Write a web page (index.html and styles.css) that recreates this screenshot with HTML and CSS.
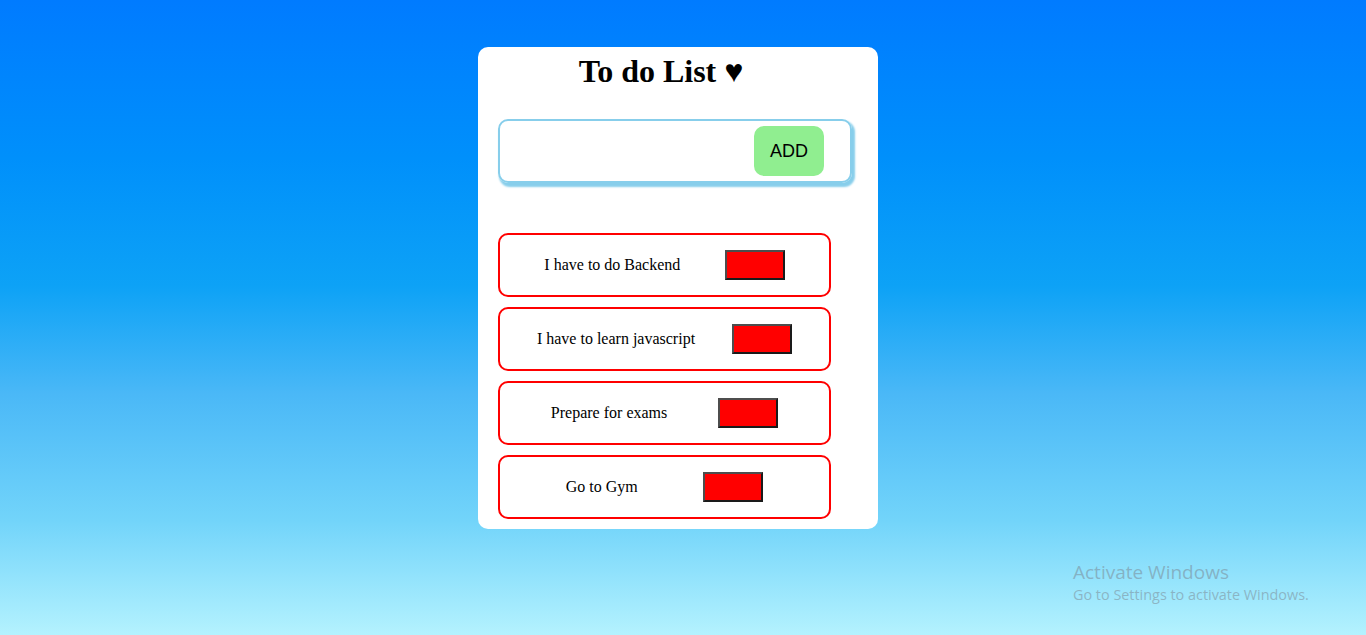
FILE: index.html
```html
<!DOCTYPE html>
<html>
<head>
<meta charset="utf-8">
<link rel="stylesheet" href="styles.css">
</head>
<body>
<div class="page">
  <div class="card">
    <h1 class="title">To do List ♥</h1>
    <div class="input-row">
      <input class="task-input" type="text">
      <button class="add-btn">ADD</button>
    </div>
    <ul class="list">
      <li class="item"><span class="item-text">I have to do Backend</span><button class="del-btn"></button></li>
      <li class="item"><span class="item-text">I have to learn javascript</span><button class="del-btn"></button></li>
      <li class="item"><span class="item-text">Prepare for exams</span><button class="del-btn"></button></li>
      <li class="item"><span class="item-text">Go to Gym</span><button class="del-btn"></button></li>
    </ul>
  </div>
</div>
<div class="watermark">
  <div class="wm-title">Activate Windows</div>
  <div class="wm-sub">Go to Settings to activate Windows.</div>
</div>
</body>
</html>
```

FILE: styles.css
```css
html, body {
  margin: 0;
  padding: 0;
  height: 100%;
}
body {
  font-family: "Liberation Serif", "Times New Roman", serif;
  background: linear-gradient(180deg, #007bff 0%, #0090fb 25%, #0da2f6 45%, #4ab8f7 62%, #72d4fa 82%, #b4f2fe 100%);
  overflow: hidden;
}
.page {
  display: flex;
  justify-content: center;
  padding: 47px 10px 0 0;
}
.card {
  width: 400px;
  height: 482px;
  box-sizing: border-box;
  background: #fff;
  border-radius: 10px;
  padding: 0 20px;
}
.title {
  margin: 0;
  padding: 6px 34px 0 0;
  height: 72px;
  box-sizing: border-box;
  text-align: center;
  font-size: 32px;
  font-weight: bold;
  line-height: 36px;
  color: #000;
}
.input-row {
  width: 354px;
  height: 64px;
  box-sizing: border-box;
  border: 2px solid #87ceeb;
  border-radius: 10px;
  box-shadow: 2px 3px 2px 1px #87ceeb;
  display: flex;
  align-items: center;
  padding: 0 26px 0 0;
}
.task-input {
  flex: 1;
  border: none;
  outline: none;
  background: transparent;
  height: 40px;
}
.add-btn {
  width: 70px;
  height: 50px;
  border: none;
  border-radius: 10px;
  background: #90ee90;
  font-family: "Liberation Sans", Arial, sans-serif;
  font-size: 18px;
  color: #000;
  padding: 0;
}
.list {
  list-style: none;
  margin: 50px 0 0 0;
  padding: 0;
  display: flex;
  flex-direction: column;
  gap: 10px;
}
.item {
  width: 333px;
  height: 64px;
  box-sizing: border-box;
  border: 2px solid #ff0000;
  border-radius: 10px;
  display: flex;
  justify-content: space-evenly;
  align-items: center;
}
.item-text {
  font-size: 16px;
  color: #000;
}
.del-btn {
  width: 60px;
  height: 30px;
  box-sizing: border-box;
  background: #ff0000;
  border: 2px solid;
  border-color: #4d4d4d #1a1a1a #1a1a1a #4d4d4d;
  padding: 0;
}
.watermark {
  position: absolute;
  left: 1073px;
  top: 560px;
  color: rgba(120, 130, 140, 0.5);
  font-family: "Open Sans", "Noto Sans", sans-serif;
}
.wm-title {
  font-size: 19px;
  line-height: 24px;
}
.wm-sub {
  font-size: 14.4px;
  line-height: 22px;
}
```
